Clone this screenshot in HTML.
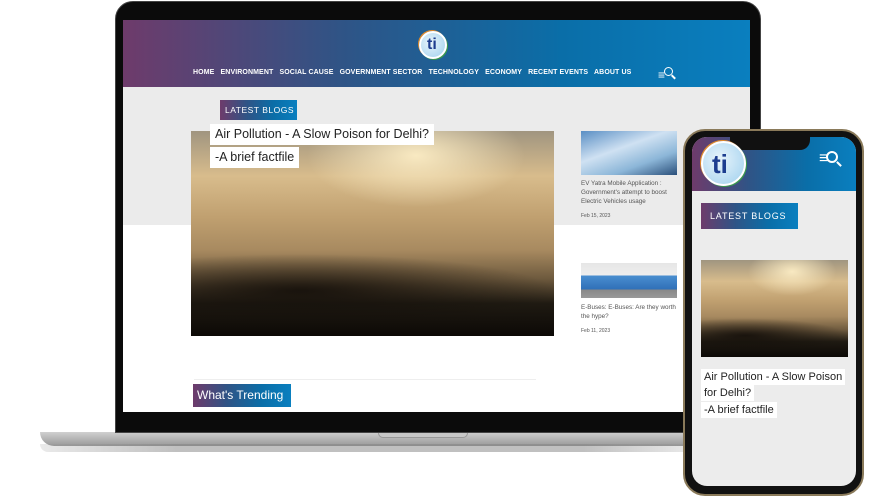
<!DOCTYPE html>
<html><head><meta charset="utf-8"><style>
*{margin:0;padding:0;box-sizing:border-box}
body{width:871px;height:500px;background:#fff;position:relative;overflow:hidden;font-family:"Liberation Sans",sans-serif}
.abs{position:absolute}
.grad{background:linear-gradient(90deg,#6e3b6b 0%,#2f5486 35%,#0a6ea8 70%,#0a7fbf 100%)}
.smog{background:
 radial-gradient(ellipse 30% 25% at 62% 12%,rgba(255,240,200,.9),rgba(255,240,200,0) 100%),
 radial-gradient(ellipse 70% 18% at 30% 78%,rgba(20,15,10,.9),rgba(20,15,10,0)),
 linear-gradient(180deg,#a09580 0%,#d8bc8c 22%,#c0a070 42%,#a88a60 58%,#6e5a3e 72%,#1f1a12 84%,#0c0906 100%)}
.nav{font-size:7px;font-weight:bold;color:#fff;letter-spacing:.1px;white-space:nowrap}
.logo{border-radius:50%;background:radial-gradient(circle at 40% 40%,#e8f4fb,#9fd0ee);border:2px solid #fff;box-shadow:1px 1px 0 #3a9a4a,-1px -1px 0 #e08a2a}
.logo span{position:absolute;color:#1d3d8f;font-weight:bold;font-family:"Liberation Sans",sans-serif}
.lbl{background:#fff;color:#222;position:absolute;white-space:nowrap}
</style></head><body>
<div class="abs" style="left:40px;top:432px;width:680px;height:14px;background:linear-gradient(180deg,#d0d0d0,#b4b4b4 50%,#999);border-radius:0 0 14px 14px"></div>
<div class="abs" style="left:40px;top:444px;width:680px;height:8px;background:linear-gradient(90deg,rgba(150,150,150,.2),rgba(130,130,130,.5) 20%,rgba(130,130,130,.5) 80%,rgba(150,150,150,.1));border-radius:0 0 20px 20px"></div>
<div class="abs" style="left:378px;top:432px;width:90px;height:6px;background:#c8c8c8;border-radius:0 0 5px 5px;border:1px solid #999;border-top:none"></div>
<div class="abs" style="left:115px;top:1px;width:646px;height:432px;background:#0b0b0b;border-radius:18px 18px 0 0;border:1px solid #444"></div>
<div class="abs" style="left:123px;top:20px;width:627px;height:392px;background:#fff;overflow:hidden">
 <div class="abs grad" style="left:0;top:0;width:627px;height:67px"></div>
 <div class="abs logo" style="left:296px;top:11px;width:28px;height:28px"><span style="left:6px;top:3px;font-size:16px">ti</span></div>
 <div class="abs nav" style="left:70px;top:49px">HOME&nbsp;&nbsp; ENVIRONMENT&nbsp;&nbsp; SOCIAL CAUSE&nbsp;&nbsp; GOVERNMENT SECTOR&nbsp;&nbsp; TECHNOLOGY&nbsp;&nbsp; ECONOMY&nbsp;&nbsp; RECENT EVENTS&nbsp;&nbsp; ABOUT US</div>
 <div class="abs" style="left:535px;top:48px;color:#fff;font-size:12px;font-weight:bold">≡</div>
 <div class="abs" style="left:541px;top:47px;width:9px;height:9px;border:1.8px solid #fff;border-radius:50%"></div>
 <div class="abs" style="left:548px;top:56px;width:5px;height:1.8px;background:#fff;transform:rotate(45deg)"></div>
 <div class="abs" style="left:0;top:67px;width:627px;height:138px;background:#ebebeb"></div>
 <div class="abs grad" style="left:97px;top:80px;width:77px;height:20px;color:#fff;font-size:8.5px;line-height:20px;padding-left:5px;letter-spacing:.5px">LATEST BLOGS</div>
 <div class="abs smog" style="left:68px;top:111px;width:363px;height:205px"></div>
 <div class="lbl" style="left:87px;top:104px;height:21px;font-size:12.5px;line-height:21px;padding:0 5px">Air Pollution - A Slow Poison for Delhi?</div>
 <div class="lbl" style="left:87px;top:127px;height:21px;font-size:12.5px;line-height:21px;padding:0 5px">-A brief factfile</div>
 <div class="abs" style="left:458px;top:111px;width:96px;height:44px;background:linear-gradient(160deg,#5a8fc4,#cfe1f2 40%,#8cb6d8 70%,#2a4f7a)"></div>
 <div class="abs" style="left:458px;top:159px;font-size:6.3px;color:#555;line-height:9px;width:100px">EV Yatra Mobile Application : Government's attempt to boost Electric Vehicles usage</div>
 <div class="abs" style="left:458px;top:193px;font-size:5px;color:#555">Feb 15, 2023</div>
 <div class="abs" style="left:458px;top:243px;width:96px;height:35px;background:linear-gradient(180deg,#e6e6e6 0%,#eee 35%,#4a8ed0 36%,#3070b8 75%,#888 76%,#999)"></div>
 <div class="abs" style="left:458px;top:283px;font-size:6.3px;color:#555;line-height:9px;width:100px">E-Buses: E-Buses: Are they worth the hype?</div>
 <div class="abs" style="left:458px;top:308px;font-size:5px;color:#555">Feb 11, 2023</div>
 <div class="abs" style="left:71px;top:359px;width:342px;height:1px;background:#eee"></div>
 <div class="abs grad" style="left:70px;top:364px;width:98px;height:23px;color:#fff;font-size:12px;line-height:23px;padding-left:4px">What's Trending</div>
</div>
<div class="abs" style="left:683px;top:129px;width:181px;height:367px;border-radius:22px;background:#111;border:2px solid #8a7a5a"></div>
<div class="abs" style="left:692px;top:137px;width:164px;height:349px;border-radius:15px;background:#ececec;overflow:hidden">
 <div class="abs grad" style="left:0;top:0;width:164px;height:54px"></div>
 <div class="abs" style="left:38px;top:-2px;width:80px;height:15px;background:#111;border-radius:0 0 10px 10px"></div>
 <div class="abs logo" style="left:9px;top:4px;width:45px;height:45px"><span style="left:9px;top:6px;font-size:26px">ti</span></div>
 <div class="abs" style="left:127px;top:14px;color:#fff;font-size:16px;font-weight:bold;line-height:16px">≡</div>
 <div class="abs" style="left:134px;top:14px;width:12px;height:12px;border:2px solid #fff;border-radius:50%"></div>
 <div class="abs" style="left:144px;top:26px;width:6px;height:2px;background:#fff;transform:rotate(45deg)"></div>
 <div class="abs grad" style="left:9px;top:66px;width:97px;height:26px;color:#fff;font-size:9px;line-height:26px;padding-left:9px;letter-spacing:.8px">LATEST BLOGS</div>
 <div class="abs smog" style="left:9px;top:123px;width:147px;height:97px"></div>
 <div class="lbl" style="left:9px;top:232px;height:16px;font-size:11px;line-height:16px;padding:0 3px">Air Pollution - A Slow Poison</div>
 <div class="lbl" style="left:9px;top:248px;height:16px;font-size:11px;line-height:16px;padding:0 3px">for Delhi?</div>
 <div class="lbl" style="left:9px;top:265px;height:16px;font-size:11px;line-height:16px;padding:0 3px">-A brief factfile</div>
</div>
</body></html>
